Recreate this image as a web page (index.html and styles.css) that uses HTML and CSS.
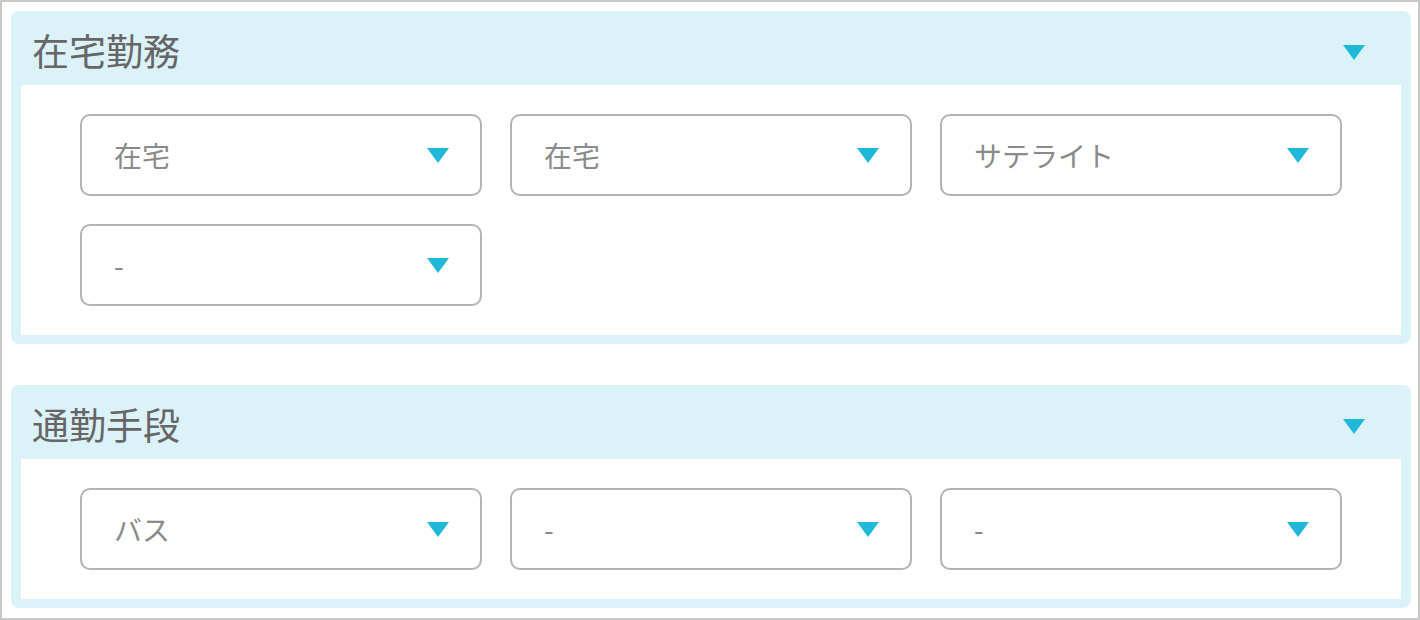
FILE: index.html
```html
<!DOCTYPE html>
<html lang="ja">
  <head>
    <meta charset="UTF-8" />
    <meta name="viewport" content="width=device-width, initial-scale=1.0" />
    <title>勤務設定</title>
    <link rel="stylesheet" href="styles.css">
  </head>
  <body>
    <div class="frame">
      <section class="panel">
        <div class="panel-head">
          <h2>在宅勤務</h2>
          <span class="caret caret-head"></span>
        </div>
        <div class="panel-body">
          <div class="select">
            <span>在宅</span>
            <span class="caret"></span>
          </div>
          <div class="select">
            <span>在宅</span>
            <span class="caret"></span>
          </div>
          <div class="select">
            <span>サテライト</span>
            <span class="caret"></span>
          </div>
          <div class="select">
            <span>-</span>
            <span class="caret"></span>
          </div>
        </div>
      </section>

      <section class="panel">
        <div class="panel-head">
          <h2>通勤手段</h2>
          <span class="caret caret-head"></span>
        </div>
        <div class="panel-body">
          <div class="select">
            <span>バス</span>
            <span class="caret"></span>
          </div>
          <div class="select">
            <span>-</span>
            <span class="caret"></span>
          </div>
          <div class="select">
            <span>-</span>
            <span class="caret"></span>
          </div>
        </div>
      </section>
    </div>
  </body>
</html>
```

FILE: styles.css
```css
* {
  box-sizing: border-box;
}
body {
  margin: 0;
  font-family: "Noto Sans CJK JP", "Noto Sans", sans-serif;
  background: #fff;
}
.frame {
  width: 1420px;
  height: 620px;
  border: 2px solid #c8c8c8;
  padding: 9px 7px 0 9px;
  display: flex;
  flex-direction: column;
  gap: 41px;
}
.panel {
  background: #dcf2f9;
  border-radius: 8px;
  padding: 0 10px 9px 10px;
}
.panel-head {
  height: 74px;
  display: flex;
  align-items: center;
  justify-content: space-between;
  padding: 0 36px 0 11px;
}
.panel-head h2 {
  margin: 0;
  font-size: 37px;
  font-weight: normal;
  color: #666;
  line-height: 1;
  padding-top: 4px;
}
.caret-head {
  margin-top: 8px;
}
.panel-body {
  background: #fff;
  padding: 29px 59px;
  display: grid;
  grid-template-columns: repeat(3, 402px);
  gap: 28px;
}
.select {
  height: 82px;
  border: 2px solid #b3b3b3;
  border-radius: 10px;
  display: flex;
  align-items: center;
  justify-content: space-between;
  padding: 0 31px 0 32px;
  font-size: 28px;
  color: #8a8a8a;
}
.caret {
  width: 0;
  height: 0;
  border-left: 11px solid transparent;
  border-right: 11px solid transparent;
  border-top: 15px solid #1fb8d8;
}
```
